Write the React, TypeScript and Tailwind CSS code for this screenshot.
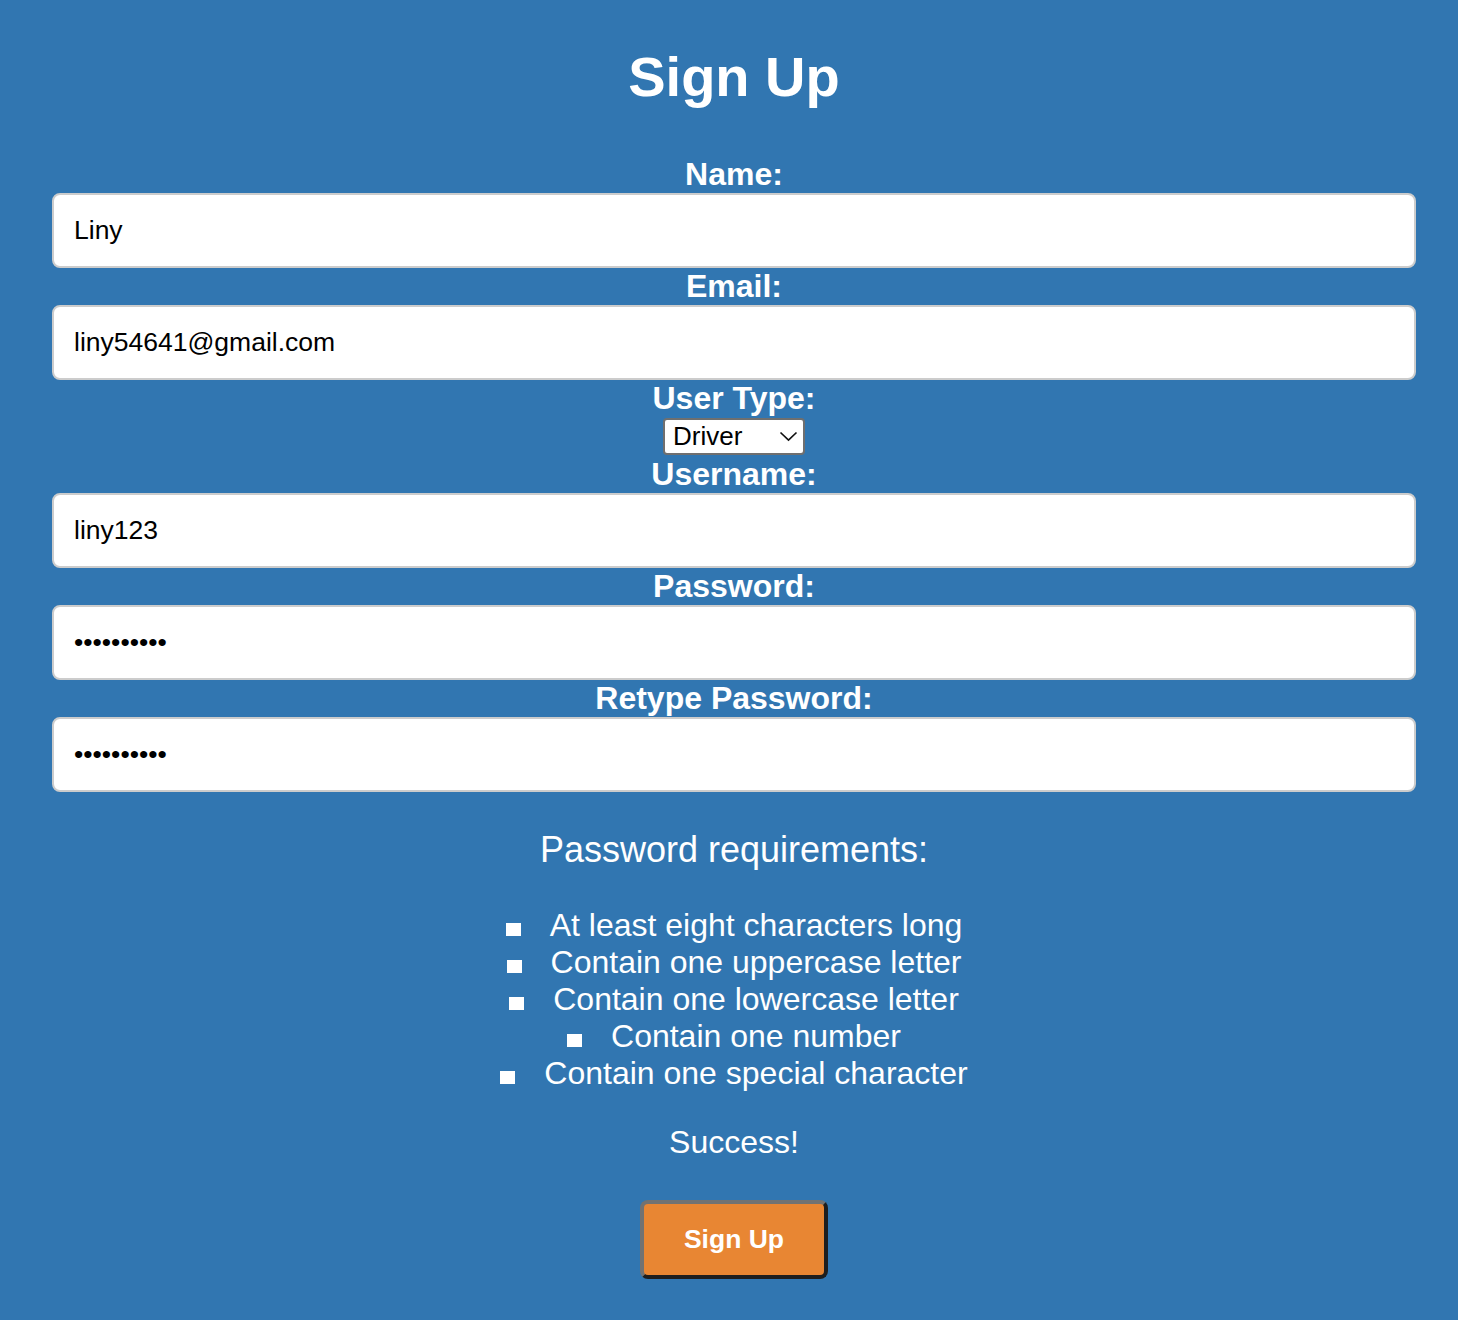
import { useState } from "react";

const requirements = [
  "At least eight characters long",
  "Contain one uppercase letter",
  "Contain one lowercase letter",
  "Contain one number",
  "Contain one special character",
];

function Field({
  label,
  type = "text",
  value,
  onChange,
}: {
  label: string;
  type?: string;
  value: string;
  onChange: (v: string) => void;
}) {
  return (
    <>
      <label className="block text-center text-[32px] font-bold leading-[37px]">
        {label}
      </label>
      <input
        type={type}
        value={value}
        onChange={(e) => onChange(e.target.value)}
        className="block w-full h-[75px] rounded-[8px] border-2 border-[#cccccc] bg-white px-[20px] text-[26.5px] text-black outline-none"
      />
    </>
  );
}

export default function App() {
  const [name, setName] = useState("Liny");
  const [email, setEmail] = useState("liny54641@gmail.com");
  const [userType, setUserType] = useState("Driver");
  const [username, setUsername] = useState("liny123");
  const [password, setPassword] = useState("Password1!");
  const [retype, setRetype] = useState("Password1!");

  return (
    <div className="min-h-[1320px] bg-[#3176b1] pt-[45px] font-['Liberation_Sans',Arial,sans-serif] text-white">
      <div className="ml-[52px] w-[1364px]">
        <h1 className="text-center text-[56px] font-bold leading-[64px]">Sign Up</h1>

        <form className="mt-[47px]" onSubmit={(e) => e.preventDefault()}>
          <Field label="Name:" value={name} onChange={setName} />
          <Field label="Email:" value={email} onChange={setEmail} />

          {/* User type picker */}
          <label className="block text-center text-[32px] font-bold leading-[37px]">
            User Type:
          </label>
          <div className="flex justify-center py-[1px]">
            <div className="relative">
              <select
                value={userType}
                onChange={(e) => setUserType(e.target.value)}
                className="block h-[37px] w-[142px] appearance-none rounded-[4px] border-2 border-[#6f6f6f] bg-white pl-[8px] text-[26px] leading-[31px] text-black outline-none"
              >
                <option>Driver</option>
                <option>Sponsor</option>
                <option>Admin</option>
              </select>
              <svg
                className="pointer-events-none absolute right-[7px] top-[13px]"
                width="19"
                height="11"
                viewBox="0 0 19 11"
                fill="none"
                stroke="#111"
                strokeWidth="1.7"
              >
                <polyline points="1.5,1.5 9.5,9 17.5,1.5" />
              </svg>
            </div>
          </div>

          <Field label="Username:" value={username} onChange={setUsername} />
          <Field label="Password:" type="password" value={password} onChange={setPassword} />
          <Field label="Retype Password:" type="password" value={retype} onChange={setRetype} />

          {/* Requirements */}
          <p className="mt-[37px] text-center text-[36px] leading-[41px]">
            Password requirements:
          </p>
          <ul className="mt-[37px] text-center text-[32px] leading-[37px]">
            {requirements.map((r) => (
              <li key={r}>
                <span className="mr-[29px] inline-block h-[13px] w-[15px] bg-white" />
                {r}
              </li>
            ))}
          </ul>

          <p className="mt-[32px] text-center text-[32px] leading-[37px]">Success!</p>

          <div className="mt-[39px] flex justify-center pb-[41px]">
            <button
              type="submit"
              className="h-[79px] w-[188px] rounded-[8px] border-[4px] border-t-[#727272] border-l-[#727272] border-b-[#1e1e1e] border-r-[#1e1e1e] bg-[#e88633] text-[26.5px] font-bold text-white"
            >
              Sign Up
            </button>
          </div>
        </form>
      </div>
    </div>
  );
}
